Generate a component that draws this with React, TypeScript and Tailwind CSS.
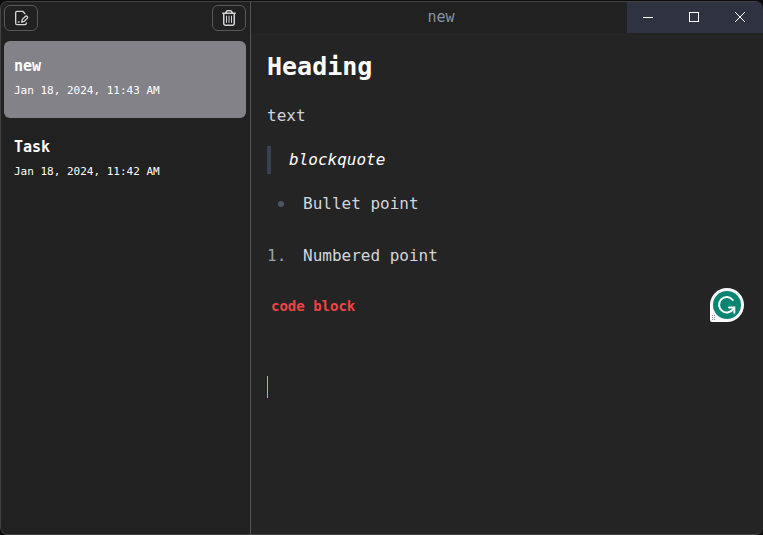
import { FaRegTrashCan } from "react-icons/fa6";

type Note = { title: string; date: string; active: boolean };

const notes: Note[] = [
  { title: "new", date: "Jan 18, 2024, 11:43 AM", active: true },
  { title: "Task", date: "Jan 18, 2024, 11:42 AM", active: false },
];

function NewNoteIcon() {
  return (
    <svg
      viewBox="0 0 24 24"
      className="size-4"
      fill="none"
      stroke="currentColor"
      strokeWidth="2"
      strokeLinecap="round"
      strokeLinejoin="round"
      aria-hidden="true"
    >
      <path d="M20 19.5v.5a2 2 0 0 1-2 2H6a2 2 0 0 1-2-2V4a2 2 0 0 1 2-2h8.5L18 5.5" />
      <path d="M8 18h1" />
      <path d="M18.42 9.61a2.1 2.1 0 1 1 2.97 2.97L16.95 17 13 18l.99-3.95 4.43-4.44Z" />
    </svg>
  );
}

function Sidebar() {
  const action =
    "rounded-md border border-[#59595d] px-2 py-1 text-[#d4d4d8] hover:bg-zinc-600/50";
  return (
    <aside className="w-[250px] shrink-0 border-r border-[#555555] bg-[#212121] px-1 pt-[3px] pl-[3px]">
      <div className="flex justify-between">
        <button type="button" aria-label="New note" className={action}>
          <NewNoteIcon />
        </button>
        <button type="button" aria-label="Delete note" className={action}>
          <FaRegTrashCan className="size-4" aria-hidden="true" />
        </button>
      </div>
      <ul className="mt-2.5 flex flex-col gap-1">
        {notes.map((note) => (
          <li key={note.title}>
            <button
              type="button"
              className={
                note.active
                  ? "block w-full rounded-md bg-[#838288] px-2.5 pt-3 pb-[19px] text-left text-white"
                  : "block w-full rounded-md px-2.5 pt-3 pb-[19px] text-left text-white"
              }
            >
              <span className="mb-1 block text-[15px] leading-[26px] font-bold">{note.title}</span>
              <span className="block text-[11px] leading-4">{note.date}</span>
            </button>
          </li>
        ))}
      </ul>
    </aside>
  );
}

function WindowControls() {
  const control = "flex items-center justify-center pb-px text-white hover:bg-white/10";
  return (
    <div className="flex h-[31px] shrink-0 bg-[#2f3241]">
      <button type="button" aria-label="Minimize" className={`w-11 pr-0.5 ${control}`}>
        <svg viewBox="0 0 10 10" className="size-2.5" shapeRendering="crispEdges" aria-hidden="true">
          <path d="M0 5h10v1H0z" fill="currentColor" />
        </svg>
      </button>
      <button type="button" aria-label="Maximize" className={`w-[46px] ${control}`}>
        <svg viewBox="0 0 10 10" className="size-2.5" aria-hidden="true">
          <rect x="0.5" y="0.5" width="9" height="9" fill="none" stroke="currentColor" />
        </svg>
      </button>
      <button type="button" aria-label="Close" className={`w-[46px] ${control}`}>
        <svg viewBox="0 0 10 10" className="size-2.5" aria-hidden="true">
          <path d="M0 0l10 10M10 0L0 10" fill="none" stroke="currentColor" />
        </svg>
      </button>
    </div>
  );
}

function AssistantBadge() {
  return (
    <button
      type="button"
      aria-label="Writing assistant"
      className="absolute right-[19px] top-[286px] size-[34px]"
    >
      <svg viewBox="0 0 34 34" className="size-full" aria-hidden="true">
        <path d="M17 0a17 17 0 1 1 0 34H2a2 2 0 0 1-2-2V17A17 17 0 0 1 17 0Z" fill="#fafafd" />
        <circle cx="17" cy="17" r="14" fill="#0b8472" />
        <path
          d="M22.8 12A7.7 7.7 0 1 0 23.5 20.5"
          fill="none"
          stroke="#fff"
          strokeWidth="2"
          strokeLinecap="round"
        />
        <path
          d="M19 19.5h5.3v5.3"
          fill="none"
          stroke="#fff"
          strokeWidth="2"
          strokeLinecap="round"
          strokeLinejoin="miter"
        />
        <g fill="#8e8e96">
          <path d="M2 27h1v1H2zM2 29h1v1H2zM2 31h1v1H2zM4 27h1v1H4zM4 29h1v1H4zM4 31h1v1H4z" />
        </g>
      </svg>
    </button>
  );
}

function Editor() {
  return (
    <article className="flex-1 px-4 pt-4 text-[16px] leading-7 text-[#d1d5db]">
      <h1 className="text-[25px] leading-9 font-bold text-white">Heading</h1>
      <p className="mt-[17px]">text</p>
      <blockquote className="mt-4 border-l-4 border-[#374151] pl-[18px] text-white italic">
        blockquote
      </blockquote>
      <ul className="mt-4">
        <li className="flex items-center">
          <span className="mr-[19px] ml-[11px] size-[6px] rounded-full bg-[#4b5563]" />
          Bullet point
        </li>
      </ul>
      <ol className="mt-6">
        <li className="flex">
          <span className="w-9 text-[#9ca3af]">1.</span>
          Numbered point
        </li>
      </ol>
      <p className="mt-[22px] px-1">
        <code className="font-['DejaVu_Sans_Mono',monospace] text-[14px] font-bold text-[#ef4444]">
          code block
        </code>
      </p>
      <div className="mt-14 h-[22px] w-px bg-[#e4ae17]" />
    </article>
  );
}

export default function App() {
  return (
    <div className="flex min-h-screen bg-[#0c0c0c] pt-px font-['DejaVu_Sans_Mono',monospace]">
      <div className="relative flex flex-1 overflow-hidden rounded-lg border border-r-0 border-[#424242] bg-[#242424]">
        <Sidebar />
        <main className="flex min-w-0 flex-1 flex-col">
          <header className="flex bg-[#212121]">
            <h2 className="flex-1 pl-1 text-center text-[15px] leading-[31px] text-[#8b919b]">new</h2>
            <WindowControls />
          </header>
          <Editor />
        </main>
        <AssistantBadge />
      </div>
    </div>
  );
}
